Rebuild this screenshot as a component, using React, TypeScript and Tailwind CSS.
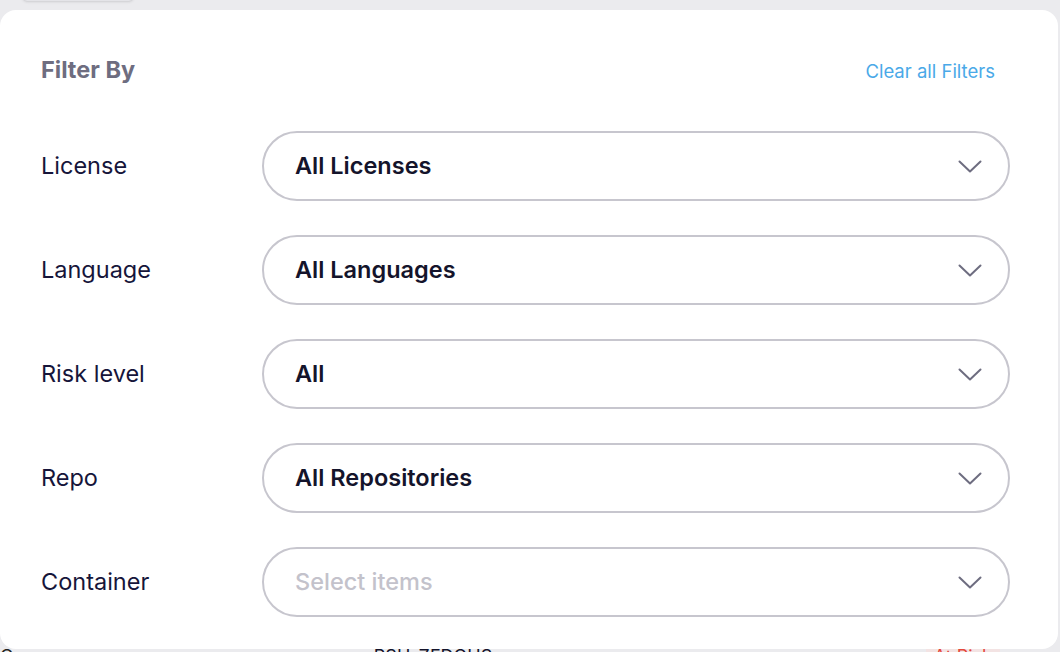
const filters = [
  { label: 'License', value: 'All Licenses' },
  { label: 'Language', value: 'All Languages' },
  { label: 'Risk level', value: 'All' },
  { label: 'Repo', value: 'All Repositories' },
  { label: 'Container', value: '', placeholder: 'Select items' },
];

const Chevron = () => (
  <svg width="24" height="13" viewBox="0 0 24 13" fill="none" className="text-[#6e6d80]">
    <polyline points="1.5,1.5 12,11.5 22.5,1.5" stroke="currentColor" strokeWidth="2" strokeLinecap="round" strokeLinejoin="round" />
  </svg>
);

const App = () => {
  return (
    <div
      className="relative h-[652px] w-[1060px] overflow-hidden bg-[#ebebee]"
      style={{ fontFamily: 'Inter, "Noto Sans", sans-serif' }}
    >
      <div className="absolute left-[22px] -top-[10px] h-[11px] w-[112px] rounded-full bg-[#e4e4e8] shadow-sm" />

      <div className="absolute bottom-0 left-0 right-0 flex h-[4px] items-start text-[18px] leading-none">
        <span className="text-[#222]">O</span>
        <span className="ml-[360px] text-[#14142b]">RSH-ZFDQUS</span>
        <span className="ml-auto mr-[60px] bg-[#f3e3e3] px-[8px] text-[#e4493c]">At Risk</span>
      </div>

      <div className="relative mt-[10px] mr-[2px] h-[639px] rounded-2xl bg-white px-[41px] pt-[48px]">
        <div className="flex h-[24px] items-center justify-between pr-[22px]">
          <h2 className="text-[23.5px] font-bold text-[#6e6d80]">Filter By</h2>
          <button className="pt-[4px] text-[18.5px] font-normal text-[#4aa9e8]">Clear all Filters</button>
        </div>

        <div className="mt-[49px] flex flex-col gap-[34px]">
          {filters.map((f) => (
            <div key={f.label} className="flex items-center">
              <span className="w-[221px] shrink-0 text-[23.5px] text-[#16153a]">{f.label}</span>
              <div className="flex h-[70px] w-[748px] items-center justify-between rounded-full border-2 border-[#c7c6ce] pl-[31px] pr-[26px]">
                {f.value ? (
                  <span className="text-[23.5px] font-semibold text-[#14142b]">{f.value}</span>
                ) : (
                  <span className="text-[23.5px] font-medium text-[#c3c2cb]">{f.placeholder}</span>
                )}
                <Chevron />
              </div>
            </div>
          ))}
        </div>
      </div>
    </div>
  );
};

export default App;
